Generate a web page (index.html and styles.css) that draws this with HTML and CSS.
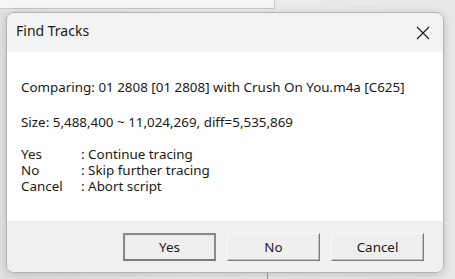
FILE: index.html
```html
<!DOCTYPE html>
<html lang="en">
<head>
  <meta charset="UTF-8" />
  <title>Find Tracks</title>
  <link rel="stylesheet" href="styles.css">
</head>
<body>
  <div class="desktop">
    <div class="back-window"></div>
    <div class="back-line"></div>

    <div class="dialog">
      <div class="titlebar">
        <span class="title">Find Tracks</span>
        <svg class="close" width="14" height="14" viewBox="0 0 14 14">
          <path d="M1 1 L13 13 M13 1 L1 13" stroke="#1a1a1a" stroke-width="1.1" fill="none" />
        </svg>
      </div>

      <div class="content">
        <p>Comparing: 01 2808 [01 2808] with Crush On You.m4a [C625]</p>
        <p>Size: 5,488,400 ~ 11,024,269, diff=5,535,869</p>
        <div class="choices">
          <div class="row"><span class="key">Yes</span><span>: Continue tracing</span></div>
          <div class="row"><span class="key">No</span><span>: Skip further tracing</span></div>
          <div class="row"><span class="key">Cancel</span><span>: Abort script</span></div>
        </div>
      </div>

      <div class="footer">
        <button class="btn default">Yes</button>
        <button class="btn">No</button>
        <button class="btn">Cancel</button>
      </div>
    </div>
  </div>
</body>
</html>
```

FILE: styles.css
```css
html, body {
  margin: 0;
  padding: 0;
}
body {
  font-family: "Noto Sans", "Open Sans", sans-serif;
  color: #1a1a1a;
  background: #e4e4e4;
  width: 455px;
  height: 279px;
  overflow: hidden;
}
.desktop {
  position: relative;
  width: 455px;
  height: 279px;
  background: linear-gradient(to right, #e2e2e2 0, #ececec 40%, #e8e8e8 100%);
}
.back-window {
  position: absolute;
  left: 0;
  top: 0;
  width: 274px;
  height: 8px;
  background: #f6f6f6;
  border-bottom: 1px solid #c9c9c9;
  border-right: 1px solid #c9c9c9;
}
.back-line {
  position: absolute;
  left: 267px;
  top: 272px;
  width: 1px;
  height: 7px;
  background: #9a9a9a;
}
.dialog {
  position: absolute;
  left: 6px;
  top: 12px;
  width: 436px;
  height: 259px;
  border: 1px solid #b4b4b4;
  border-radius: 8px;
  overflow: hidden;
  display: flex;
  flex-direction: column;
  box-shadow: 0 2px 10px rgba(0, 0, 0, 0.18);
}
.titlebar {
  height: 39px;
  background: #f3f3f3;
  display: flex;
  align-items: center;
  justify-content: space-between;
  padding: 0 13px 0 9px;
  box-sizing: border-box;
}
.title {
  font-size: 14px;
  line-height: 18px;
  padding-bottom: 3px;
}
.close {
  margin-top: 1px;
}
.content {
  flex: 1;
  background: #fff;
  padding: 27px 0 0 14px;
  font-size: 13.4px;
  line-height: 16px;
}
.content p {
  margin: 0 0 19px 0;
}
.content p + p {
  margin-bottom: 16px;
}
.row {
  display: flex;
  height: 16px;
}
.key {
  width: 60px;
}
.footer {
  height: 51px;
  background: #f0f0f0;
  display: flex;
  justify-content: flex-end;
  align-items: flex-start;
  gap: 11px;
  padding: 12px 19px 0 0;
  box-sizing: border-box;
}
.btn {
  width: 93px;
  height: 28px;
  font-family: inherit;
  font-size: 13.4px;
  color: #1a1a1a;
  background: #efefef;
  border: 1px solid;
  border-color: #f8f8f8 #7a7a7a #7a7a7a #f8f8f8;
  box-shadow: inset -1px -1px 0 #c4c4c4;
  padding: 0;
  cursor: pointer;
}
.btn.default {
  border: 2px solid #8a8a8a;
  border-bottom-color: #7a7a7a;
  box-shadow: inset 1px 1px 0 #e0e0e0;
}
```
